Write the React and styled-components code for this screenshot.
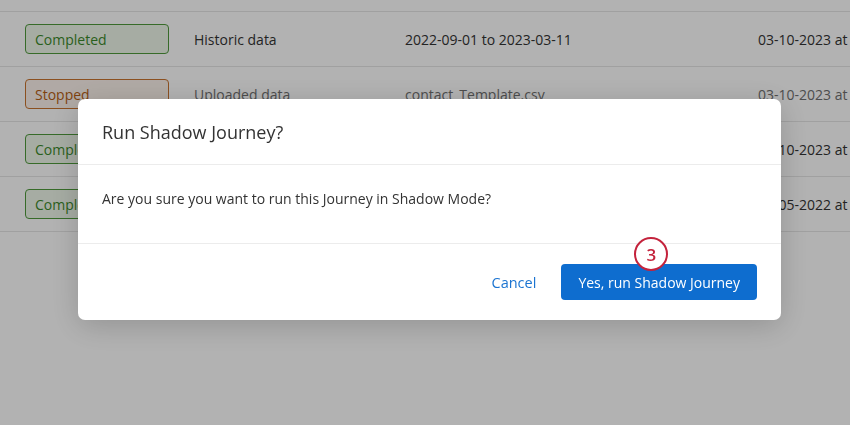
import React from 'react';
import styled, { createGlobalStyle } from 'styled-components';

const GlobalStyle = createGlobalStyle`
  html, body {
    margin: 0;
    padding: 0;
    background: #ffffff;
    font-family: "Open Sans", "Noto Sans", sans-serif;
    overflow: hidden;
  }
`;

const Page = styled.div`
  width: 850px;
  height: 425px;
  padding-top: 11px;
  box-sizing: border-box;
`;

const Row = styled.div`
  display: grid;
  grid-template-columns: 169px 211px 353px 1fr;
  align-items: center;
  height: 54px;
  padding-left: 25px;
  border-top: 1px solid #e6e6e6;
  font-size: 14px;
  color: ${({ $muted }) => ($muted ? '#6f6f6f' : '#333333')};
  white-space: nowrap;
  &:last-child {
    border-bottom: 1px solid #e6e6e6;
  }
`;

const Cell = styled.div`
  overflow: hidden;
`;

const Badge = styled.span`
  display: flex;
  align-items: center;
  box-sizing: border-box;
  width: 144px;
  height: 30px;
  padding-left: 9px;
  border-radius: 4px;
  font-size: 14px;
  border: 1px solid ${({ $tone }) => ($tone === 'stopped' ? '#c8732f' : '#4f9a3c')};
  background: ${({ $tone }) => ($tone === 'stopped' ? '#fcf3ec' : '#eef6ea')};
  color: ${({ $tone }) => ($tone === 'stopped' ? '#b65f15' : '#3c8a2a')};
`;

const Overlay = styled.div`
  position: fixed;
  inset: 0;
  background: rgba(0, 0, 0, 0.3);
  display: flex;
  justify-content: center;
  align-items: flex-start;
  padding: 99px 0 0 9px;
`;

const Modal = styled.div`
  width: 703px;
  background: #ffffff;
  border-radius: 7px;
  box-shadow: 0 6px 30px rgba(0, 0, 0, 0.18);
`;

const Header = styled.div`
  height: 65px;
  display: flex;
  align-items: center;
  padding: 0 24px;
  border-bottom: 1px solid #ececec;
`;

const Title = styled.h2`
  margin: 0;
  font-size: 18px;
  font-weight: 400;
  color: #333333;
`;

const Body = styled.div`
  height: 79px;
  display: flex;
  align-items: center;
  padding: 0 24px 12px;
  box-sizing: border-box;
  border-bottom: 1px solid #ececec;
  font-size: 14px;
  color: #333333;
`;

const Footer = styled.div`
  display: flex;
  justify-content: flex-end;
  align-items: center;
  gap: 25px;
  padding: 20px 24px 20px;
`;

const LinkButton = styled.button`
  border: none;
  background: none;
  padding: 0;
  font-family: inherit;
  font-size: 14.5px;
  color: #1b74d1;
  cursor: pointer;
`;

const PrimaryWrap = styled.span`
  position: relative;
  display: inline-flex;
`;

const PrimaryButton = styled.button`
  height: 36px;
  padding: 0 17px;
  border: none;
  border-radius: 4px;
  background: #0e6dcf;
  color: #ffffff;
  font-family: inherit;
  font-size: 14px;
  cursor: pointer;
`;

const Callout = styled.span`
  position: absolute;
  left: 73px;
  top: -27px;
  width: 34px;
  height: 34px;
  box-sizing: border-box;
  border: 2.5px solid #c4233c;
  border-radius: 50%;
  background: #ffffff;
  color: #c4233c;
  font-size: 17px;
  font-weight: 600;
  display: flex;
  align-items: center;
  justify-content: center;
`;

const rows = [
  { status: 'Completed', tone: 'done', source: 'Historic data', range: '2022-09-01 to 2023-03-11', date: '03-10-2023 at 10:24 AM' },
  { status: 'Stopped', tone: 'stopped', source: 'Uploaded data', range: 'contact_Template.csv', date: '03-10-2023 at 10:02 AM', muted: true },
  { status: 'Completed', tone: 'done', source: 'Historic data', range: '2022-09-01 to 2023-03-11', date: '03-10-2023 at 9:41 AM' },
  { status: 'Completed', tone: 'done', source: 'Historic data', range: '2022-01-01 to 2022-12-05', date: '12-05-2022 at 4:12 PM' },
];

export default function App() {
  return (
    <>
      <GlobalStyle />
      <Page>
        {rows.map((r, i) => (
          <Row key={i} $muted={r.muted}>
            <Cell>
              <Badge $tone={r.tone}>{r.status}</Badge>
            </Cell>
            <Cell>{r.source}</Cell>
            <Cell>{r.range}</Cell>
            <Cell>{r.date}</Cell>
          </Row>
        ))}
      </Page>
      <Overlay>
        <Modal>
          <Header>
            <Title>Run Shadow Journey?</Title>
          </Header>
          <Body>Are you sure you want to run this Journey in Shadow Mode?</Body>
          <Footer>
            <LinkButton>Cancel</LinkButton>
            <PrimaryWrap>
              <PrimaryButton>Yes, run Shadow Journey</PrimaryButton>
              <Callout>3</Callout>
            </PrimaryWrap>
          </Footer>
        </Modal>
      </Overlay>
    </>
  );
}
